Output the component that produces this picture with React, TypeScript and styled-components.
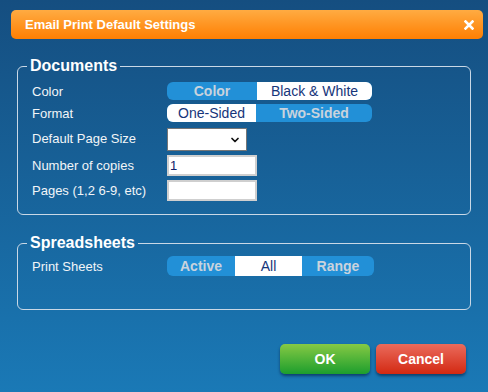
import React, { useState } from "react";
import styled, { createGlobalStyle } from "styled-components";
import { ChevronDown } from "lucide-react";

const GlobalStyle = createGlobalStyle`
  html, body {
    margin: 0;
    padding: 0;
  }
  body {
    font-family: "Liberation Sans", Arial, sans-serif;
  }
`;

const Page = styled.div`
  width: 488px;
  height: 392px;
  box-sizing: border-box;
  padding-top: 10px;
  background: linear-gradient(to bottom, #154e80 0%, #1a79b6 100%);
  display: flex;
  flex-direction: column;
  overflow: hidden;
`;

const TitleBar = styled.div`
  height: 29px;
  margin: 0 5px 0 11px;
  padding: 0 9px 0 14px;
  border-radius: 5px;
  background: linear-gradient(to bottom, #ffab42 0%, #ff7f02 100%);
  display: flex;
  align-items: center;
  justify-content: space-between;
  color: #ffffff;
  font-size: 13px;
  font-weight: bold;
`;

const CloseButton = styled.button`
  border: none;
  background: none;
  padding: 0;
  width: 10px;
  height: 10px;
  display: flex;
  cursor: pointer;
`;

const Body = styled.div`
  padding: 0 17px;
  display: flex;
  flex-direction: column;
`;

const Group = styled.fieldset<{ $pad: string; $top: number }>`
  margin: ${(p) => p.$top}px 0 0;
  padding: ${(p) => p.$pad};
  border: 1px solid #c9d8e6;
  border-radius: 6px;
  min-width: 0;
  display: flex;
  flex-direction: column;
  gap: 4px;
`;

const Legend = styled.legend`
  margin-left: -5px;
  padding: 0 3px;
  color: #ffffff;
  font-size: 16px;
  font-weight: bold;
  line-height: 18px;
`;

const Row = styled.div`
  display: grid;
  grid-template-columns: 135px auto;
  align-items: center;
`;

const Label = styled.div`
  color: #f2f5f8;
  font-size: 13px;
`;

const Toggle = styled.div<{ $h: number }>`
  display: flex;
  width: max-content;
  height: ${(p) => p.$h}px;
  border-radius: 6px;
  overflow: hidden;
  background: #2290d7;
`;

const Segment = styled.button<{ $w: number; $on: boolean }>`
  width: ${(p) => p.$w}px;
  height: 100%;
  border: none;
  padding: 0;
  font-family: "Liberation Sans", Arial, sans-serif;
  font-size: 14px;
  font-weight: ${(p) => (p.$on ? "normal" : "bold")};
  color: ${(p) => (p.$on ? "#16357a" : "#c9d3dd")};
  background: ${(p) => (p.$on ? "#ffffff" : "transparent")};
  cursor: pointer;
`;

const SelectWrap = styled.div`
  position: relative;
  width: 80px;
  height: 23px;
  margin: 2px 0 0;
`;

const Select = styled.select`
  width: 100%;
  height: 100%;
  box-sizing: border-box;
  appearance: none;
  border: 1px solid #767676;
  border-radius: 0;
  background: #ffffff;
  font-family: "Liberation Sans", Arial, sans-serif;
  font-size: 13px;
`;

const SelectIcon = styled.span`
  position: absolute;
  right: 6px;
  top: 6px;
  display: flex;
  pointer-events: none;
  color: #111111;
`;

const TextInput = styled.input`
  width: 90px;
  height: 21px;
  box-sizing: border-box;
  border: 2px solid #cfcfcf;
  border-radius: 0;
  padding: 0 1px;
  background: #ffffff;
  color: #10206a;
  font-family: "Liberation Sans", Arial, sans-serif;
  font-size: 13px;
  outline: none;
`;

const Actions = styled.div`
  margin-top: 34px;
  padding-right: 5px;
  display: flex;
  justify-content: flex-end;
  gap: 6px;
`;

const ActionButton = styled.button<{ $tone: "ok" | "cancel" }>`
  width: 90px;
  height: 30px;
  border: none;
  border-radius: 5px;
  color: #ffffff;
  font-family: "Liberation Sans", Arial, sans-serif;
  font-size: 14px;
  font-weight: bold;
  cursor: pointer;
  box-shadow: 0 2px 3px rgba(0, 10, 40, 0.5);
  background: ${(p) =>
    p.$tone === "ok"
      ? "linear-gradient(to bottom, #86c944 0%, #1c9e2d 100%)"
      : "linear-gradient(to bottom, #ea6b5c 0%, #d32912 100%)"};
`;

type Seg = { label: string; w: number };

const SegmentToggle = (params: { segs: Seg[]; value: number; height: number; onPick: (i: number) => void }) => {
  const { segs, value, height, onPick } = params;
  return (
    <Toggle $h={height}>
      {segs.map((s, i) => (
        <Segment key={s.label} $w={s.w} $on={i === value} onClick={() => onPick(i)}>
          {s.label}
        </Segment>
      ))}
    </Toggle>
  );
};

const App = () => {
  const [color, setColor] = useState(1);
  const [format, setFormat] = useState(0);
  const [sheets, setSheets] = useState(1);
  const [copies, setCopies] = useState("1");
  const [pages, setPages] = useState("");

  return (
    <>
      <GlobalStyle />
      <Page>
        <TitleBar>
          <span>Email Print Default Settings</span>
          <CloseButton aria-label="Close">
            <svg width="10" height="10" viewBox="0 0 10 10">
              <path d="M1.5 1.5 L8.5 8.5 M8.5 1.5 L1.5 8.5" stroke="#ffffff" strokeWidth="2.6" strokeLinecap="square" />
            </svg>
          </CloseButton>
        </TitleBar>

        <Body>
          <Group $top={18} $pad="7px 14px 13px">
            <Legend>Documents</Legend>
            <Row>
              <Label>Color</Label>
              <SegmentToggle
                height={18}
                value={color}
                onPick={setColor}
                segs={[
                  { label: "Color", w: 90 },
                  { label: "Black & White", w: 115 },
                ]}
              />
            </Row>
            <Row>
              <Label>Format</Label>
              <SegmentToggle
                height={18}
                value={format}
                onPick={setFormat}
                segs={[
                  { label: "One-Sided", w: 89 },
                  { label: "Two-Sided", w: 116 },
                ]}
              />
            </Row>
            <Row>
              <Label>Default Page Size</Label>
              <SelectWrap>
                <Select defaultValue="">
                  <option value=""></option>
                  <option value="letter">Letter</option>
                  <option value="a4">A4</option>
                </Select>
                <SelectIcon>
                  <ChevronDown size={12} strokeWidth={3.5} />
                </SelectIcon>
              </SelectWrap>
            </Row>
            <Row>
              <Label>Number of copies</Label>
              <TextInput value={copies} onChange={(e) => setCopies(e.target.value)} />
            </Row>
            <Row>
              <Label>Pages (1,2 6-9, etc)</Label>
              <TextInput value={pages} onChange={(e) => setPages(e.target.value)} />
            </Row>
          </Group>

          <Group $top={19} $pad="4px 14px 33px">
            <Legend>Spreadsheets</Legend>
            <Row>
              <Label>Print Sheets</Label>
              <SegmentToggle
                height={20}
                value={sheets}
                onPick={setSheets}
                segs={[
                  { label: "Active", w: 68 },
                  { label: "All", w: 67 },
                  { label: "Range", w: 72 },
                ]}
              />
            </Row>
          </Group>

          <Actions>
            <ActionButton $tone="ok">OK</ActionButton>
            <ActionButton $tone="cancel">Cancel</ActionButton>
          </Actions>
        </Body>
      </Page>
    </>
  );
};

export default App;
